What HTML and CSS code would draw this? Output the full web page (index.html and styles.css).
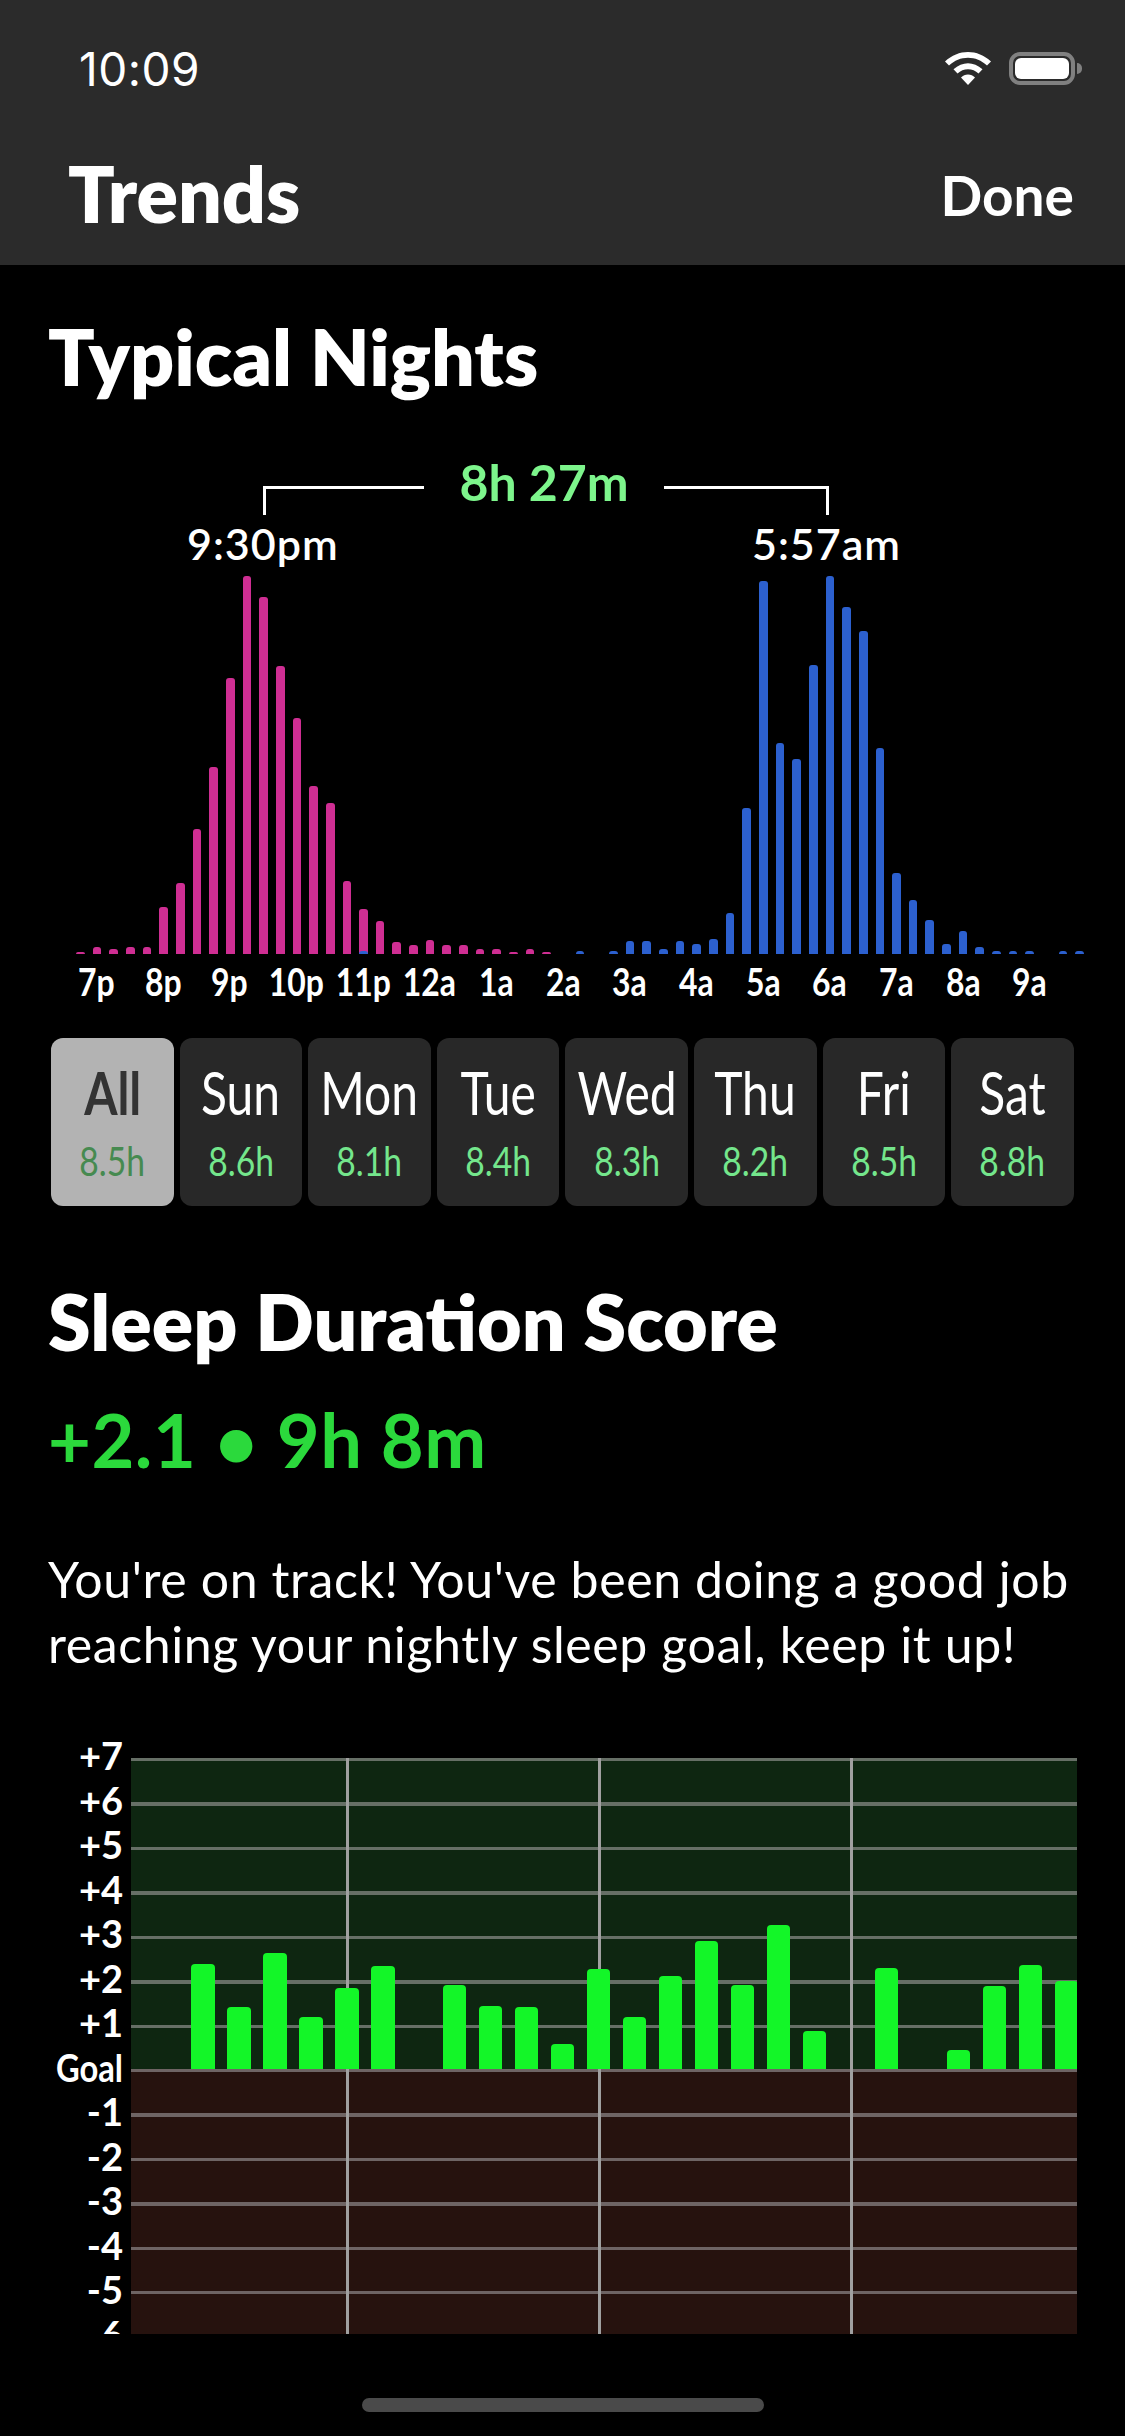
FILE: index.html
```html
<!DOCTYPE html>
<html>
<head>
    <title>Trends</title>
    <link rel="stylesheet" href="styles.css">
</head>
<body>
    <div id="screen">
        <header id="top-bar">
            <div id="status-bar">
                <span class="clock">10:09</span>
                <div class="status-icons">
                    <svg class="wifi" width="46" height="33" viewBox="0 0 46 33">
                        <path d="M23 0C31 0 39.500 3.300 46 9.500L42 13.500C36.500 8.500 30 5.800 23 5.800S9.500 8.500 4 13.500L0 9.500C6.500 3.300 15 0 23 0z" fill="#fff"/>
                        <path d="M23 11.300C28 11.300 33 13.300 37.500 17.300L33.500 21.500C30.500 18.800 27 17.300 23 17.300S15.500 18.800 12.500 21.500L8.500 17.300C13 13.300 18 11.300 23 11.300z" fill="#fff"/>
                        <path d="M23 22.500C25.800 22.500 28 23.500 30 25.500L23 33L16 25.500C18 23.500 20.200 22.500 23 22.500z" fill="#fff"/>
                    </svg>
                    <div class="battery"><div class="battery-fill"></div></div>
                    <div class="battery-cap"></div>
                </div>
            </div>
            <div id="nav-bar">
                <h1>Trends</h1>
                <span class="done">Done</span>
            </div>
        </header>

        <section id="nights">
            <h2>Typical Nights</h2>
            <div class="span-row">
                <div class="bracket bracket-left"></div>
                <span class="span-value">8h 27m</span>
                <div class="bracket bracket-right"></div>
            </div>
            <div class="time-row">
                <span class="time time-start">9:30pm</span>
                <span class="time time-end">5:57am</span>
            </div>
            <div class="histogram" id="histogram"></div>
            <div class="hours" id="hours"></div>
            <div class="days" id="days"></div>
        </section>

        <section id="score">
            <h2>Sleep Duration Score</h2>
            <div class="score-value">+2.1 • 9h 8m</div>
            <p>You're on track! You've been doing a good job reaching your nightly sleep goal, keep it up!</p>
            <div class="score-chart">
                <div class="y-axis" id="y-axis"></div>
                <div class="plot">
                    <div class="zone zone-good" id="score-bars"></div>
                    <div class="zone zone-bad"></div>
                </div>
            </div>
        </section>

        <div id="home-indicator"></div>
    </div>

    <script>
        // bar heights read off the chart, one slot per 15 minutes
        const PINK = [2,7,5,7,7,47,71,125,187,276,378,357,288,236,168,151,73,45,33,12,9,14,9,9,5,5,2,5,2];
        const BLUE = [3,0,3,13,13,5,13,10,15,41,146,373,211,195,289,378,347,323,206,81,54,34,10,23,7,3,3,3,0,3,3];
        const HOURS = ['7p','8p','9p','10p','11p','12a','1a','2a','3a','4a','5a','6a','7a','8a','9a'];
        const DAYS = [['All','8.5h'],['Sun','8.6h'],['Mon','8.1h'],['Tue','8.4h'],['Wed','8.3h'],['Thu','8.2h'],['Fri','8.5h'],['Sat','8.8h']];
        const AXIS = ['+7','+6','+5','+4','+3','+2','+1','Goal','-1','-2','-3','-4','-5','-6'];
        const SCORES = [105,62,116,52,81,103,0,84,63,62,25,100,52,93,128,84,144,38,0,101,0,19,83,104,88];

        function addBar(parent, height, color) {
            const bar = document.createElement('div');
            bar.className = 'bar ' + color;
            bar.style.height = height + 'px';
            parent.appendChild(bar);
            return bar;
        }

        const histogram = document.getElementById('histogram');
        PINK.forEach(h => addBar(histogram, h, 'pink'));
        addBar(histogram, 0, 'pink');
        BLUE.forEach(h => addBar(histogram, h, 'blue'));
        histogram.children[17].classList.add('overlap');

        const hours = document.getElementById('hours');
        HOURS.forEach(label => {
            const cell = document.createElement('span');
            cell.textContent = label;
            hours.appendChild(cell);
        });

        const days = document.getElementById('days');
        DAYS.forEach((day, i) => {
            const tab = document.createElement('div');
            tab.className = 'day' + (i === 0 ? ' selected' : '');
            tab.innerHTML = '<span class="day-name">' + day[0] + '</span><span class="day-hours">' + day[1] + '</span>';
            days.appendChild(tab);
        });

        const axis = document.getElementById('y-axis');
        AXIS.forEach(label => {
            const tick = document.createElement('span');
            tick.textContent = label;
            if (label === 'Goal') tick.className = 'goal';
            axis.appendChild(tick);
        });

        const scoreBars = document.getElementById('score-bars');
        SCORES.forEach(h => addBar(scoreBars, h, 'green'));
    </script>
</body>
</html>
```

FILE: styles.css
```css
* {
    box-sizing: border-box;
}

html, body {
    margin: 0;
    background: #000;
}

#screen {
    position: relative;
    width: 1125px;
    height: 2436px;
    overflow: hidden;
    background: #000;
    color: #fff;
    font-family: Lato, "Noto Sans", sans-serif;
}

/* Top bar */
#top-bar {
    height: 265px;
    background: #2b2b2b;
}

#status-bar {
    height: 148px;
    padding: 44px 43px 0 79px;
    display: flex;
    justify-content: space-between;
    align-items: flex-start;
}

.clock {
    font-family: Inter, sans-serif;
    font-size: 46px;
    line-height: 50px;
    letter-spacing: 0.5px;
}

.status-icons {
    display: flex;
    align-items: center;
    padding-top: 8px;
}

.wifi {
    margin-right: 18px;
}

.battery {
    width: 66px;
    height: 33px;
    padding: 2px;
    border: 4px solid #808080;
    border-radius: 11px;
}

.battery-fill {
    height: 100%;
    background: #fff;
    border-radius: 6px;
}

.battery-cap {
    width: 5px;
    height: 11px;
    margin-left: 2px;
    background: #808080;
    border-radius: 0 5px 5px 0;
}

#nav-bar {
    padding: 0 51px 0 68px;
    display: flex;
    justify-content: space-between;
    align-items: center;
}

#nav-bar h1 {
    margin: 0;
    font-size: 77px;
    line-height: 90px;
    font-weight: 800;
}

.done {
    margin-top: 4px;
    font-size: 55px;
    font-weight: 700;
}

/* Typical nights */
#nights {
    padding: 0 51px 0 48px;
}

h2 {
    margin: 0;
    font-size: 77px;
    line-height: 90px;
    font-weight: 800;
}

#nights h2 {
    margin-top: 46px;
}

.span-row {
    margin: 55px 0 0 215px;
    display: flex;
    align-items: flex-start;
    height: 81px;
}

.bracket {
    width: 161px;
    height: 29px;
    margin-top: 30px;
    border-top: 3px solid #fff;
}

.bracket-left {
    border-left: 3px solid #fff;
}

.bracket-right {
    width: 165px;
    border-right: 3px solid #fff;
}

.span-value {
    width: 240px;
    padding-top: 1px;
    text-align: center;
    font-size: 50px;
    line-height: 50px;
    font-weight: 700;
    color: #7df58c;
}

.time-row {
    position: relative;
    height: 39px;
}

.time {
    position: absolute;
    top: -18px;
    font-size: 43px;
    line-height: 50px;
    font-weight: 600;
    letter-spacing: 1px;
}

.time-start {
    left: 139px;
}

.time-end {
    left: 704px;
}

.histogram {
    height: 378px;
    margin-left: 28px;
    display: flex;
    align-items: flex-end;
    gap: 8px;
}

.bar {
    flex: none;
    border-radius: 3px 3px 0 0;
}

.histogram .bar {
    width: 8.67px;
}

.pink {
    background: #cf2e93;
}

.blue {
    background: #2c60cf;
}

.overlap {
    position: relative;
}

.overlap::after {
    content: "";
    position: absolute;
    left: 0;
    right: 0;
    bottom: 0;
    height: 3px;
    background: #2c60cf;
    border-radius: 3px 3px 0 0;
}

.hours {
    margin: 4px 0 0 15px;
    display: grid;
    grid-template-columns: repeat(15, 66.67px);
}

.hours span {
    text-align: center;
    font-size: 38px;
    line-height: 46px;
    font-weight: 700;
    transform: scaleX(0.84);
}

.days {
    margin: 34px 0 0 3px;
    display: grid;
    grid-template-columns: repeat(8, 122.6px);
    gap: 6px;
}

.day {
    height: 168px;
    padding-top: 18px;
    display: flex;
    flex-direction: column;
    align-items: center;
    background: #282828;
    border-radius: 12px;
}

.day-name {
    font-size: 60px;
    line-height: 72px;
    transform: scaleX(0.8);
}

.day-hours {
    margin-top: 8px;
    font-size: 41px;
    line-height: 50px;
    color: #74e68c;
    transform: scaleX(0.82);
}

.selected {
    background: #b3b3b3;
}

.selected .day-name {
    color: #333;
    font-weight: 700;
}

.selected .day-hours {
    color: #468a50;
}

/* Sleep duration score */
#score {
    padding: 0 40px 0 48px;
}

#score h2 {
    margin-top: 70px;
}

.score-value {
    margin-top: 29px;
    font-size: 74px;
    line-height: 90px;
    font-weight: 700;
    letter-spacing: 0.5px;
    color: #2bd93c;
}

#score p {
    margin: 62px 0 0;
    font-size: 50px;
    line-height: 65px;
    letter-spacing: 0.6px;
}

.score-chart {
    margin-top: 56px;
    display: flex;
    align-items: flex-start;
}

.y-axis {
    width: 75px;
    height: 601px;
    overflow: hidden;
    display: flex;
    flex-direction: column;
    align-items: flex-end;
}

.y-axis span {
    flex: none;
    font-size: 38px;
    line-height: 44.5px;
    font-weight: 700;
}

.y-axis .goal {
    transform: scaleX(0.86);
    transform-origin: right center;
}

.plot {
    width: 946px;
    margin: 25px 0 0 8px;
    overflow: hidden;
}

.zone {
    background-image:
        repeating-linear-gradient(to right, transparent 0 215px, #a0a0a0 215px 218px, transparent 218px 252px),
        repeating-linear-gradient(to bottom, var(--line) 0 3px, transparent 3px 44.5px);
}

.zone-good {
    --line: #666f66;
    height: 311px;
    padding-left: 60px;
    display: flex;
    align-items: flex-end;
    gap: 12.4px;
    background-color: #0e2611;
}

.zone-bad {
    --line: #6e6464;
    height: 265px;
    background-color: #26120e;
}

.green {
    width: 23.6px;
    border-radius: 4px 4px 0 0;
    background: #13f628;
}

#home-indicator {
    position: absolute;
    left: 362px;
    top: 2398px;
    width: 402px;
    height: 14px;
    background: #4a4a4a;
    border-radius: 7px;
}
```
